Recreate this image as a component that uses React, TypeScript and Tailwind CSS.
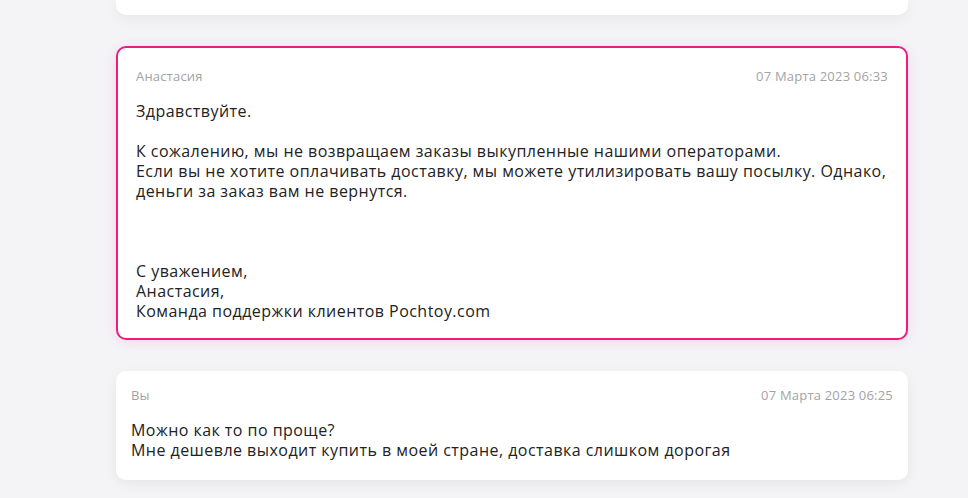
import React from "react";

const font = { fontFamily: '"Open Sans", "Noto Sans", sans-serif' };

export default function App() {
  return (
    <div
      className="w-[968px] h-[498px] overflow-hidden bg-[#f4f4f7] pl-[116px] flex flex-col"
      style={font}
    >
      <div className="w-[792px] h-[15px] bg-white rounded-b-[10px] shadow-[0_4px_14px_rgba(0,0,0,0.06)]" />

      <div className="mt-[31px] w-[792px] h-[294px] bg-white rounded-[10px] border-2 border-[#ee1c7f] shadow-[0_2px_14px_rgba(238,28,127,0.12)] px-[18px] pt-[20px]">
        <div className="flex justify-between text-[13px] leading-[16px] text-[#a3a3a3] tracking-[0.2px]">
          <span>Анастасия</span>
          <span>07 Марта 2023 06:33</span>
        </div>
        <div className="mt-[17px] text-[16px] leading-[20px] text-[#222222] whitespace-nowrap tracking-[0.46px]">
          <div>Здравствуйте.</div>
          <div>&nbsp;</div>
          <div>К сожалению, мы не возвращаем заказы выкупленные нашими операторами.</div>
          <div>Если вы не хотите оплачивать доставку, мы можете утилизировать вашу посылку. Однако,</div>
          <div>деньги за заказ вам не вернутся.</div>
          <div>&nbsp;</div>
          <div>&nbsp;</div>
          <div>&nbsp;</div>
          <div>С уважением,</div>
          <div>Анастасия,</div>
          <div>Команда поддержки клиентов Pochtoy.com</div>
        </div>
      </div>

      <div className="mt-[31px] w-[792px] h-[109px] bg-white rounded-[10px] shadow-[0_4px_14px_rgba(0,0,0,0.06)] px-[15px] pt-[16px]">
        <div className="flex justify-between text-[13px] leading-[16px] text-[#a3a3a3] tracking-[0.2px]">
          <span>Вы</span>
          <span>07 Марта 2023 06:25</span>
        </div>
        <div className="mt-[17px] text-[16px] leading-[20px] text-[#222222] whitespace-nowrap tracking-[0.46px]">
          <div>Можно как то по проще?</div>
          <div>Мне дешевле выходит купить в моей стране, доставка слишком дорогая</div>
        </div>
      </div>
    </div>
  );
}
